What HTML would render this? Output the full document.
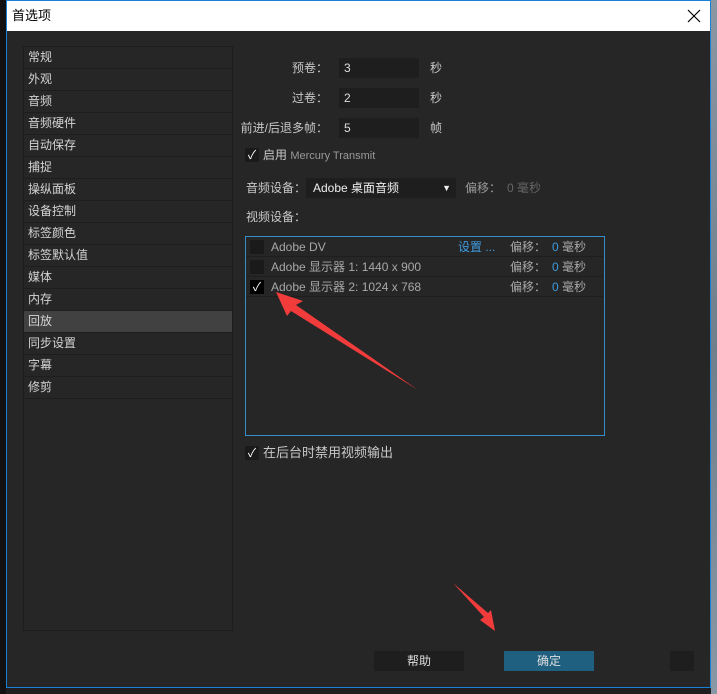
<!DOCTYPE html><html><head><meta charset="utf-8"><style>
*{margin:0;padding:0;box-sizing:border-box}
body{width:717px;height:694px;background:#1e1e1e;position:relative;overflow:hidden;font-family:"Liberation Sans","Noto Sans CJK SC",sans-serif;font-size:12px;color:#c8c8c8}
.a{position:absolute}
.win{left:6px;top:0;width:705px;height:688px;border:1px solid #1a7fd6;background:#262626}
.title{left:7px;top:1px;width:703px;height:30px;background:#fff;color:#000;font-size:13px;line-height:30px;padding-left:5px}
.lp{left:23px;top:46px;width:210px;height:585px;border:1px solid #1c1c1c;background:#262626}
.it{height:22px;line-height:21px;padding-left:4px;border-bottom:1px solid #1e1e1e;color:#d4d4d4;font-size:12px}
.sel{background:#414141}
.inp{background:#1e1e1e;height:20px;line-height:20px;padding-left:5px;color:#ddd;width:80px}
.lbl{text-align:right;width:100px;line-height:20px}
.cb{width:14px;height:14px;background:#1a1a1a;color:#fff;font-size:12px;line-height:14px;text-align:center}
.row{left:246px;width:357px;height:20px;border-bottom:1px solid #1e1e1e;line-height:20px;color:#a8a8a8}
.blue{color:#3d9be0}
.btn{height:20px;line-height:20px;text-align:center;color:#ddd}
</style></head><body>
<div class="a" style="left:0;top:0;width:6px;height:694px;background:#111"></div>
<div class="a" style="left:711px;top:0;width:6px;height:694px;background:linear-gradient(#8a98a4,#6f7f8c,#8898a6)"></div>
<div class="a win"></div>
<div class="a title">首选项</div>
<svg class="a" style="left:687px;top:9px" width="14" height="14"><path d="M1 1L13 13M13 1L1 13" stroke="#000" stroke-width="1.2"/></svg>
<div class="a lp">
<div class="it">常规</div><div class="it">外观</div><div class="it">音频</div><div class="it">音频硬件</div><div class="it">自动保存</div><div class="it">捕捉</div><div class="it">操纵面板</div><div class="it">设备控制</div><div class="it">标签颜色</div><div class="it">标签默认值</div><div class="it">媒体</div><div class="it">内存</div><div class="it sel">回放</div><div class="it">同步设置</div><div class="it">字幕</div><div class="it">修剪</div>
</div>
<div class="a lbl" style="left:228px;top:58px">预卷：</div><div class="a inp" style="left:339px;top:58px">3</div><div class="a" style="left:430px;top:58px;line-height:20px">秒</div>
<div class="a lbl" style="left:228px;top:88px">过卷：</div><div class="a inp" style="left:339px;top:88px">2</div><div class="a" style="left:430px;top:88px;line-height:20px">秒</div>
<div class="a lbl" style="left:228px;top:118px">前进/后退多帧：</div><div class="a inp" style="left:339px;top:118px">5</div><div class="a" style="left:430px;top:118px;line-height:20px">帧</div>
<div class="a cb" style="left:245px;top:148px">✓</div><div class="a" style="left:263px;top:147px;line-height:16px">启用 <span style="color:#999;font-size:11px">Mercury Transmit</span></div>
<div class="a" style="left:246px;top:178px;line-height:20px">音频设备：</div>
<div class="a" style="left:306px;top:178px;width:150px;height:20px;background:#1e1e1e;color:#eee;line-height:20px;padding-left:7px">Adobe 桌面音频<span style="position:absolute;right:5px;font-size:9px">▼</span></div>
<div class="a" style="left:465px;top:178px;line-height:20px;color:#999">偏移：</div><div class="a" style="left:507px;top:178px;line-height:20px;color:#666">0 毫秒</div>
<div class="a" style="left:246px;top:207px;line-height:20px">视频设备：</div>
<div class="a" style="left:245px;top:236px;width:360px;height:200px;border:1px solid #3a8cc8"></div>
<div class="a row" style="top:237px"><div class="a cb" style="left:4px;top:3px"></div><span class="a" style="left:25px">Adobe DV</span><span class="a blue" style="left:212px">设置 ...</span><span class="a" style="left:264px">偏移：</span><span class="a" style="left:306px"><span class="blue">0</span> 毫秒</span></div>
<div class="a row" style="top:257px"><div class="a cb" style="left:4px;top:3px"></div><span class="a" style="left:25px">Adobe 显示器 1: 1440 x 900</span><span class="a" style="left:264px">偏移：</span><span class="a" style="left:306px"><span class="blue">0</span> 毫秒</span></div>
<div class="a row" style="top:277px"><div class="a cb" style="left:4px;top:3px;background:#000">✓</div><span class="a" style="left:25px">Adobe 显示器 2: 1024 x 768</span><span class="a" style="left:264px">偏移：</span><span class="a" style="left:306px"><span class="blue">0</span> 毫秒</span></div>
<div class="a cb" style="left:245px;top:446px">✓</div><div class="a" style="left:263px;top:445px;line-height:16px;font-size:13px">在后台时禁用视频输出</div>
<div class="a btn" style="left:374px;top:651px;width:90px;background:#1e1e1e">帮助</div>
<div class="a btn" style="left:504px;top:651px;width:90px;background:#1f5f80">确定</div>
<div class="a" style="left:670px;top:651px;width:24px;height:20px;background:#1e1e1e"></div>
<svg class="a" style="left:0;top:0" width="717" height="694"><polygon points="276,292 303,301 296,305 418,390 291,311 287,316" fill="#f23c3c"/><polygon points="495,631 480,620 484,617 453,583 488,613 491,610" fill="#f23c3c"/></svg>
</body></html>
